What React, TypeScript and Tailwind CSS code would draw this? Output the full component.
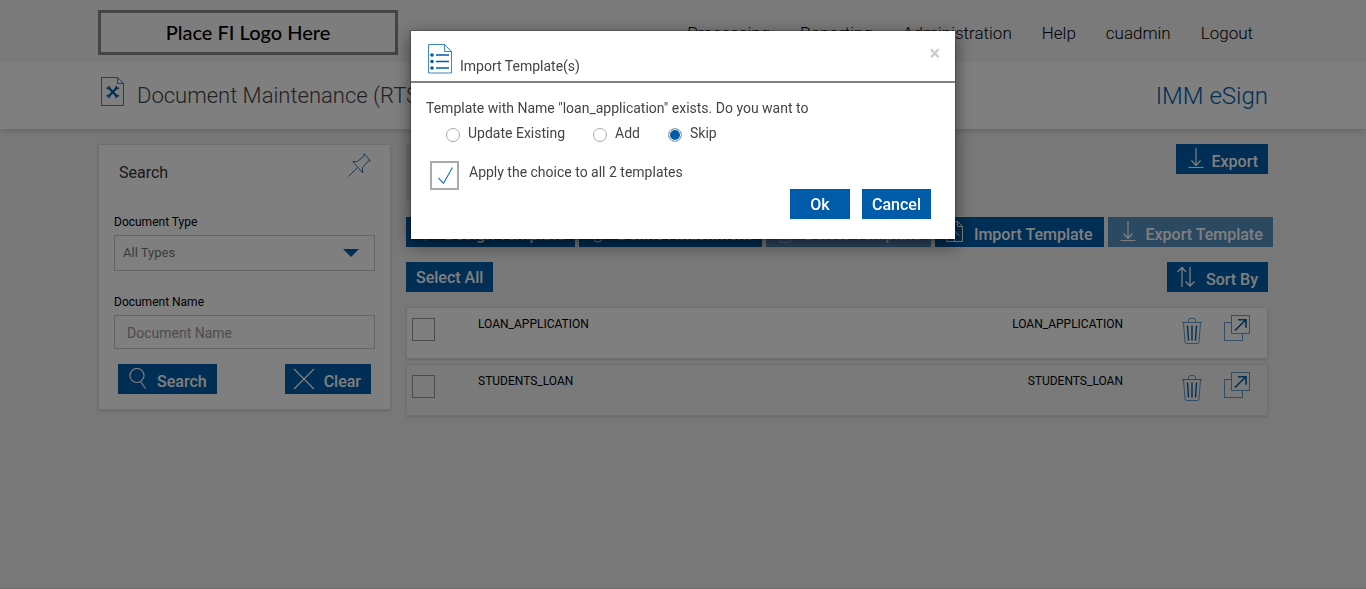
import { useState } from 'react';
import type { ReactNode } from 'react';

const NAV_LINKS = ['Processing', 'Reporting', 'Administration', 'Help', 'cuadmin', 'Logout'];

const TEMPLATES = ['LOAN_APPLICATION', 'STUDENTS_LOAN'];

const CHOICES = [
  { value: 'update', label: 'Update Existing' },
  { value: 'add', label: 'Add' },
  { value: 'skip', label: 'Skip' },
];

function DocumentToolsIcon() {
  return (
    <svg className="w-6 h-[30px] text-[#005ca8]" viewBox="0 0 24 30" fill="none" stroke="currentColor">
      <path d="M.5.5h16l6 6v22H.5zM16.5.5v6h6" strokeOpacity={0.75} />
      <path d="M7.500 10.500l8.500 9M16 10.500l-8.500 9" strokeWidth={2.2} />
      <path d="M5.500 11l2.500.5.5-2.500M18 11l-2.500.500-.5-2.500M5.500 19l2.500-.5.5 2.500M18 19l-2.500-.5-.5 2.500" strokeWidth={1.6} />
    </svg>
  );
}

function ListIcon() {
  return (
    <svg className="w-6 h-[30px] text-[#005ca8]" viewBox="0 0 24 30" fill="none" stroke="currentColor">
      <path d="M.5.5h16l7 7v21.500H.5zM16.500.5v7h7" strokeOpacity={0.75} />
      <path d="M8 11h13M8 17.500h13M8 24h13" strokeWidth={1.5} />
      <g fill="currentColor" stroke="none">
        <circle cx="4" cy="11" r="1.800" />
        <circle cx="4" cy="17.500" r="1.800" />
        <circle cx="4" cy="24" r="1.800" />
      </g>
    </svg>
  );
}

function PinIcon() {
  return (
    <svg className="w-6 h-6 text-[#33658f]" viewBox="0 0 24 24" fill="none" stroke="currentColor" strokeWidth={0.9}>
      <path d="M16 .8l6.500 7-2.500.4-5.500 6.500.2 5.300-10-11.500 4.500.2 6.500-5.500zM9.500 14.500L.5 23.500" />
    </svg>
  );
}

function DownloadIcon() {
  return (
    <svg className="w-4 h-[22px]" viewBox="0 0 16 22" fill="none" stroke="currentColor" strokeWidth={1.2}>
      <path d="M8 0v17.500M3.500 12.500l4.500 5 4.500-5M.5 19.500h15" />
    </svg>
  );
}

function SearchIcon() {
  return (
    <svg className="w-[18px] h-[22px]" viewBox="0 0 18 22" fill="none" stroke="currentColor" strokeWidth={1.2}>
      <circle cx="9" cy="7.500" r="7" />
      <path d="M12.500 13.500l5 7" />
    </svg>
  );
}

function CloseIcon() {
  return (
    <svg className="w-[22px] h-[22px]" viewBox="0 0 22 22" fill="none" stroke="currentColor" strokeWidth={1.2}>
      <path d="M1 1l20 20M21 1L1 21" />
    </svg>
  );
}

function SortIcon() {
  return (
    <svg className="w-[18px] h-[22px]" viewBox="0 0 18 22" fill="none" stroke="currentColor" strokeWidth={1.3}>
      <path d="M5 21V1.500M.5 6L5 1.500 9 6M13 1v19M8.500 15.500L13 20l4.500-4.500" />
    </svg>
  );
}

function ImportIcon() {
  return (
    <svg className="w-[18px] h-[22px]" viewBox="0 0 18 22" fill="none" stroke="currentColor">
      <path d="M.5 .5h11l5 5v15H.5zM11.500.5v5h5M8.500 20V10M4 14.500L8.500 10l4.500 4.500" />
    </svg>
  );
}

function PlusIcon() {
  return (
    <svg className="w-[18px] h-[22px]" viewBox="0 0 18 22" fill="none" stroke="currentColor">
      <path d="M9.500 2v18M1 11h17" />
    </svg>
  );
}

function ClipIcon() {
  return (
    <svg className="w-[18px] h-[22px]" viewBox="0 0 18 22" fill="none" stroke="currentColor">
      <path d="M5 6v11a4 4 0 0 0 8 0V5a3 3 0 0 0-6 0v11a1.500 1.500 0 0 0 3 0V7" />
    </svg>
  );
}

function TrashIcon({ className = 'w-[22px] h-[26px]' }: { className?: string }) {
  return (
    <svg className={className} viewBox="0 0 22 26" fill="none" stroke="currentColor">
      <path d="M1 4.500h20M7.500 4.500V2.500q0-2 2-2h3q2 0 2 2v2M2.500 4.500L4 24q.1 1.500 1.500 1.500h11q1.400 0 1.500-1.500l1.500-19.500" strokeOpacity={0.6} />
      <path d="M6.500 7.500l1 15M11 7.500v15M15.500 7.500l-1 15" strokeWidth={1.4} />
    </svg>
  );
}

function OpenIcon() {
  return (
    <svg className="w-[26px] h-[26px]" viewBox="0 0 26 26" fill="none" stroke="currentColor">
      <path d="M7.500.5h18v18h-18zM7.500 7.500h-7v18h18v-7" strokeOpacity={0.6} />
      <path d="M11 15.500L21.500 5M14 4.700h8v8" strokeWidth={1.6} />
    </svg>
  );
}

type ButtonProps = {
  children: ReactNode;
  icon?: ReactNode;
  disabled?: boolean;
  className?: string;
  onClick?: () => void;
};

function Button({ children, icon, disabled, className = 'px-[10px]', onClick }: ButtonProps) {
  return (
    <button
      type="button"
      onClick={onClick}
      disabled={disabled}
      className={`flex items-start h-[30px] shrink-0 whitespace-nowrap text-white text-base font-medium ${
        disabled ? 'bg-[#5992c5]' : 'bg-[#005ca8] hover:bg-[#004a87]'
      } ${className}`}
    >
      {icon && <span className="pt-1">{icon}</span>}
      <span className={icon ? 'leading-9' : 'leading-8'}>{children}</span>
    </button>
  );
}

function SearchPanel() {
  return (
    <section className="w-[293px] shrink-0 self-start bg-white border border-[#dedede] shadow-sm px-[15px] pb-[15px]">
      <div className="flex justify-between pt-2 pl-[5px] pr-[3px]">
        <h2 className="text-base leading-10 text-[#333]">Search</h2>
        <button type="button" aria-label="Pin search panel" className="self-start">
          <PinIcon />
        </button>
      </div>
      <label htmlFor="doc-type" className="block mt-5 pb-1 text-xs leading-[18px]">
        Document Type
      </label>
      <div className="relative">
        <select
          id="doc-type"
          className="appearance-none w-full h-9 border border-[#c8c8c8] px-2 text-[13px] text-[#777] bg-white"
        >
          <option>All Types</option>
        </select>
        <svg className="absolute right-4 top-[14px] w-4 h-2 text-[#005ca8] pointer-events-none" viewBox="0 0 16 8">
          <path d="M0 0h16L8 8z" fill="currentColor" />
        </svg>
      </div>
      <label htmlFor="doc-name" className="block mt-[22px] pb-1 text-xs leading-[18px]">
        Document Name
      </label>
      <input
        id="doc-name"
        type="text"
        placeholder="Document Name"
        className="block w-full h-[34px] border border-[#c8c8c8] px-3 pt-[2px] text-sm placeholder:text-[#999]"
      />
      <div className="flex justify-between mt-[15px] px-1">
        <Button icon={<SearchIcon />} className="gap-[11px] px-[10px]">
          Search
        </Button>
        <Button icon={<CloseIcon />} className="gap-[9px] pl-2 pr-[10px]">
          Clear
        </Button>
      </div>
    </section>
  );
}

function TemplateRow({ name, shaded }: { name: string; shaded: boolean }) {
  return (
    <li
      className={`flex items-start h-[52px] border border-[#e0e0e0] shadow-sm pl-[5px] pr-[17px] ${
        shaded ? 'bg-[#f5f5f5]' : 'bg-white'
      }`}
    >
      <input
        type="checkbox"
        aria-label={name}
        className="appearance-none mt-[10px] w-[23px] h-[23px] border border-[#999] checked:bg-[#005ca8]"
      />
      <span className="ml-[43px] mt-[7px] text-xs leading-[18px]">{name}</span>
      <span className="ml-auto mt-[7px] text-xs leading-[18px]">{name}</span>
      <div className="flex gap-[21px] ml-[58px] text-[#005ca8]">
        <button type="button" aria-label={`Delete ${name}`} className="mt-[10px]">
          <TrashIcon />
        </button>
        <button type="button" aria-label={`Open ${name}`} className="mt-[7px] self-start">
          <OpenIcon />
        </button>
      </div>
    </li>
  );
}

function ImportDialog({ onClose }: { onClose: () => void }) {
  const [choice, setChoice] = useState('skip');
  const [applyAll, setApplyAll] = useState(true);

  return (
    <div className="fixed inset-0 z-10 flex items-start justify-center bg-black/50 pt-[30px]">
      <div
        role="dialog"
        aria-modal="true"
        aria-labelledby="import-title"
        className="w-full max-w-[546px] bg-white bg-clip-padding border border-black/20 shadow-[0_5px_15px_rgba(0,0,0,0.5)] text-sm text-[#444]"
      >
        <header className="flex items-start h-[52px] border-b-2 border-[#808080] pl-[17px] pr-[15px]">
          <div className="mt-[13px]">
            <ListIcon />
          </div>
          <h2 id="import-title" className="ml-2 mt-[25px] leading-5">
            Import Template(s)
          </h2>
          <button
            type="button"
            aria-label="Close"
            onClick={onClose}
            className="ml-auto mt-3 text-xl leading-5 font-bold text-[#ccc] hover:text-[#888]"
          >
            ×
          </button>
        </header>

        <div className="pl-[15px] pr-6 pt-[15px] pb-5">
          <p className="leading-5">Template with Name "loan_application" exists. Do you want to</p>
          <div className="flex gap-7 mt-[5px] pl-5">
            {CHOICES.map((c) => (
              <label key={c.value} className="flex items-start leading-5">
                <input
                  type="radio"
                  name="choice"
                  value={c.value}
                  checked={choice === c.value}
                  onChange={() => setChoice(c.value)}
                  className="appearance-none w-[14px] h-[14px] mt-[5px] mr-2 rounded-full border border-[#aaa] checked:bg-[#005ca8] checked:shadow-[inset_0_0_0_1px_white]"
                />
                {c.label}
              </label>
            ))}
          </div>
          <label className="flex items-start mt-[18px] pl-1 leading-[22px]">
            <span className="relative mr-[10px]">
              <input
                type="checkbox"
                checked={applyAll}
                onChange={(e) => setApplyAll(e.target.checked)}
                className="block appearance-none w-[29px] h-[29px] border-2 border-[#aaa]"
              />
              {applyAll && (
                <svg
                  className="absolute left-2 top-[6px] w-[15px] h-[17px] text-[#2a78bb] pointer-events-none"
                  viewBox="0 0 15 17"
                  fill="none"
                  stroke="currentColor"
                  strokeWidth={1.2}
                >
                  <path d="M.5 11l5 5.300L14.500.5" />
                </svg>
              )}
            </span>
            Apply the choice to all 2 templates
          </label>
          <div className="flex justify-end gap-3 -mt-px">
            <Button onClick={onClose} className="justify-center min-w-[60px] px-[10px]">
              Ok
            </Button>
            <Button onClick={onClose}>Cancel</Button>
          </div>
        </div>
      </div>
    </div>
  );
}

export default function App() {
  const [dialogOpen, setDialogOpen] = useState(true);

  return (
    <div className="flex flex-col min-h-screen bg-[#f0f0f0] text-black font-['Roboto','Liberation_Sans',sans-serif]">
      <header className="bg-[#f4f4f4]">
        <div className="flex items-start justify-between max-w-[1170px] h-[62px] mx-auto pt-[10px]">
          <div className="flex items-center justify-center w-[300px] h-[45px] border-3 border-[#888] bg-[#fafafa] pb-[2px] text-xl font-medium font-['Lato',sans-serif]">
            Place FI Logo Here
          </div>
          <nav className="flex gap-[30px] pr-[15px] pt-[10px]">
            {NAV_LINKS.map((link) => (
              <a key={link} href="#" className="text-[17px] leading-[26px] font-light hover:underline">
                {link}
              </a>
            ))}
          </nav>
        </div>
      </header>

      <div className="bg-white shadow-md">
        <div className="flex items-start justify-between max-w-[1170px] h-[67px] mx-auto pl-[3px]">
          <div className="flex">
            <div className="mt-[15px]">
              <DocumentToolsIcon />
            </div>
            <h1 className="ml-3 mt-[18px] text-[22px] leading-8 font-light text-[#444]">Document Maintenance (RTS)</h1>
          </div>
          <span className="mt-[18px] text-2xl leading-8 font-light text-[#005ca8]">IMM eSign</span>
        </div>
      </div>

      <main className="flex gap-[15px] w-full max-w-[1170px] mx-auto pt-[15px] grow">
        <SearchPanel />
        <section className="grow min-w-0">
          <div className="flex items-start justify-between">
            <div className="w-[290px] h-[58px] bg-[#e2e2e2]" />
            <Button icon={<DownloadIcon />} className="gap-[7px] pl-3 pr-[10px]">
              Export
            </Button>
          </div>

          <div className="flex gap-1 mt-[15px]">
            <Button icon={<PlusIcon />} className="gap-[11px] px-[10px]">
              Design Template
            </Button>
            <Button icon={<ClipIcon />} className="gap-[11px] px-[10px]">
              Define Attachment
            </Button>
            <Button icon={<TrashIcon className="w-[18px] h-[22px]" />} disabled className="gap-[11px] px-[10px]">
              Delete Template
            </Button>
            <Button icon={<ImportIcon />} className="gap-[10px] px-[11px]">
              Import Template
            </Button>
            <Button icon={<DownloadIcon />} disabled className="gap-[10px] pl-3 pr-[10px]">
              Export Template
            </Button>
          </div>

          <div className="flex justify-between mt-[15px]">
            <Button>Select All</Button>
            <Button icon={<SortIcon />} className="gap-[11px] px-[10px]">
              Sort By
            </Button>
          </div>

          <ul className="flex flex-col gap-[5px] mt-[15px]">
            {TEMPLATES.map((name, i) => (
              <TemplateRow key={name} name={name} shaded={i % 2 === 1} />
            ))}
          </ul>
        </section>
      </main>
      <footer className="h-px bg-[#ddd]" />

      {dialogOpen && <ImportDialog onClose={() => setDialogOpen(false)} />}
    </div>
  );
}
